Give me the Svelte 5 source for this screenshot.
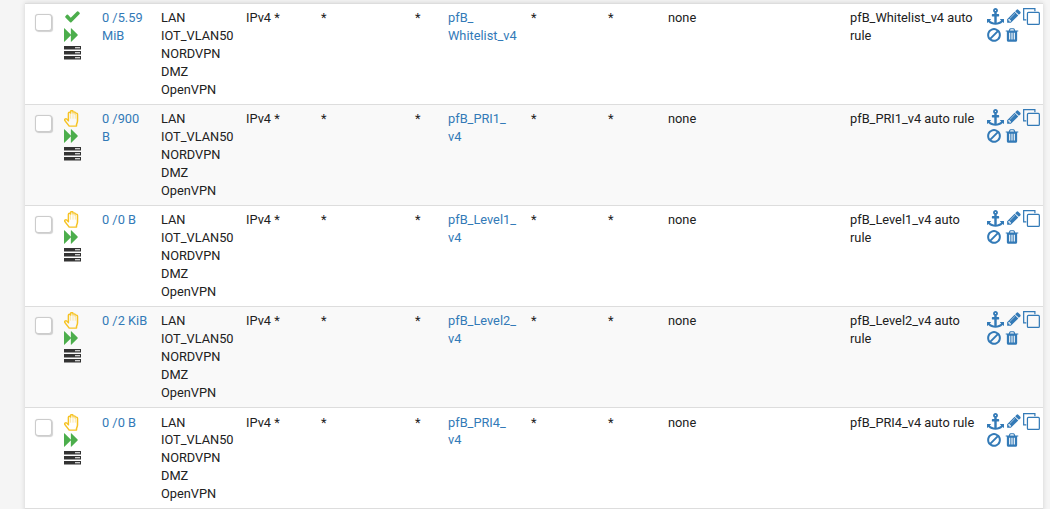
<script>
  const P = {
    anchor: "M960 256q0-26-19-45t-45-19-45 19-19 45 19 45 45 19 45-19 19-45zm832 928v352q0 22-20 30-8 2-12 2-12 0-23-9l-93-93q-119 143-318.5 226.5t-429.5 83.5-429.5-83.5-318.5-226.5l-93 93q-9 9-23 9-4 0-12-2-20-8-20-30v-352q0-14 9-23t23-9h352q22 0 30 20 8 19-7 35l-100 100q67 91 189.5 153.5t271.5 82.5v-647h-192q-26 0-45-19t-19-45v-128q0-26 19-45t45-19h192v-163q-58-34-93-92.5t-35-128.5q0-106 75-181t181-75 181 75 75 181q0 70-35 128.5t-93 92.5v163h192q26 0 45 19t19 45v128q0 26-19 45t-45 19h-192v647q149-20 271.5-82.5t189.5-153.5l-100-100q-15-16-7-35 8-20 30-20h352q14 0 23 9t9 23z",
    pencil: "M491 1536l91-91-235-235-91 91v107h128v128h107zm523-928q0-22-22-22-10 0-17 7l-542 542q-7 7-7 17 0 22 22 22 10 0 17-7l542-542q7-7 7-17zm-54-192l416 416-832 832h-416v-416zm683 96q0 53-37 90l-166 166-416-416 166-165q36-38 90-38 53 0 91 38l235 234q37 39 37 91z",
    ban: "M1440 893q0-161-87-295l-754 753q137 89 297 89 111 0 211.5-43.5t173.5-116.5 116-174.5 43-212.5zm-999 299l755-754q-135-91-300-91-148 0-273 73t-198 199-73 274q0 162 89 299zm1223-299q0 157-61 300t-163.5 246-245 164-298.5 61-298.5-61-245-164-163.5-246-61-300 61-299.5 163.5-245.5 245-164 298.5-61 298.5 61 245 164 163.5 245.5 61 299.5z",
    trash: "M704 1376v-704q0-14-9-23t-23-9h-64q-14 0-23 9t-9 23v704q0 14 9 23t23 9h64q14 0 23-9t9-23zm256 0v-704q0-14-9-23t-23-9h-64q-14 0-23 9t-9 23v704q0 14 9 23t23 9h64q14 0 23-9t9-23zm256 0v-704q0-14-9-23t-23-9h-64q-14 0-23 9t-9 23v704q0 14 9 23t23 9h64q14 0 23-9t9-23zm-544-992h448l-48-117q-7-9-17-11h-317q-10 2-17 11zm928 32v64q0 14-9 23t-23 9h-96v948q0 83-47 143.5t-113 60.5h-832q-66 0-113-58.5t-47-141.5v-952h-96q-14 0-23-9t-9-23v-64q0-14 9-23t23-9h309l70-167q15-37 54-63t79-26h320q40 0 79 26t54 63l70 167h309q14 0 23 9t9 23z",
    check: "M1671 566q0 40-28 68l-724 724-136 136q-28 28-68 28t-68-28l-136-136-362-362q-28-28-28-68t28-68l136-136q28-28 68-28t68 28l294 295 656-657q28-28 68-28t68 28l136 136q28 28 28 68z",
    forward: "M45 1651q-19 19-32 13t-13-32v-1472q0-26 13-32t32 13l710 710q9 9 13 19v-710q0-26 13-32t32 13l710 710q19 19 19 45t-19 45l-710 710q-19 19-32 13t-13-32v-710q-4 10-13 19z"
  };
  const ifaces = ["LAN", "IOT_VLAN50", "NORDVPN", "DMZ", "OpenVPN"];
  const rows = [
    { pass: true, states: "0 /5.59 MiB", alias: ["pfB_", "Whitelist_v4"], descr: "pfB_Whitelist_v4 auto rule" },
    { pass: false, states: "0 /900 B", alias: ["pfB_PRI1_", "v4"], descr: "pfB_PRI1_v4 auto rule" },
    { pass: false, states: "0 /0 B", alias: ["pfB_Level1_", "v4"], descr: "pfB_Level1_v4 auto rule" },
    { pass: false, states: "0 /2 KiB", alias: ["pfB_Level2_", "v4"], descr: "pfB_Level2_v4 auto rule" },
    { pass: false, states: "0 /0 B", alias: ["pfB_PRI4_", "v4"], descr: "pfB_PRI4_v4 auto rule" }
  ];
</script>

<div class="page">
  <div class="panel">
    {#each rows as r, i}
      <div class="row" class:odd={i % 2 === 1}>
        <div class="c-check"><span class="box"></span></div>
        <div class="c-icons">
          {#if r.pass}
            <svg class="ic-check" viewBox="0 0 1792 1792"><path fill="#4cae4c" d={P.check} /></svg>
          {:else}
            <svg class="ic-hand" viewBox="1 1 16 18.6" preserveAspectRatio="none"><path fill="none" stroke="#f6c325" stroke-width="1.5" stroke-linejoin="round" stroke-linecap="round" d="M6.2 18.6c-1-1.4-3.9-5.4-4.4-6.2-.8-1.3 1-2.5 2-1.4l1.6 1.9V4.6c0-1.6 2.2-1.6 2.2 0V2.9c0-1.7 2.4-1.7 2.4 0v1.3c0-1.5 2.3-1.5 2.3.2v1c0-1.4 2.2-1.4 2.2.3v7.3c0 1.4-.6 2.6-1 3.8v1.8H6.2z" /><path fill="none" stroke="#fbe6a2" stroke-width="1" d="M7.6 5v5.5M10 3v7.5M12.3 4.5v6" /></svg>
          {/if}
          <svg class="ic-fwd" viewBox="0 0 1792 1792"><path fill="#4cae4c" d={P.forward} /></svg>
          <svg class="ic-srv" viewBox="0 0 17 14">
            <path fill="#333" d="M0 0h17v3.6H0zM0 5h17v3.6H0zM0 10h17v3.6H0z" />
            <path fill="#fff" d="M11 1.3h5v1h-5zM11 6.3h5v1h-5zM11 11.3h5v1h-5z" />
          </svg>
        </div>
        <div class="c-states"><span class="link">{r.states}</span></div>
        <div class="c-if">{#each ifaces as f}<div>{f}</div>{/each}</div>
        <div class="c-proto">IPv4 *</div>
        <div class="c-src">*</div>
        <div class="c-port">*</div>
        <div class="c-alias"><span class="link">{r.alias[0]}<br />{r.alias[1]}</span></div>
        <div class="c-dport">*</div>
        <div class="c-gw">*</div>
        <div class="c-queue">none</div>
        <div class="c-descr">{r.descr}</div>
        <div class="c-actions">
          <svg class="a-anchor" viewBox="0 0 1792 1792"><path d={P.anchor} /></svg>
          <svg class="a-pencil" viewBox="0 0 1792 1792"><path d={P.pencil} /></svg>
          <svg class="a-clone" viewBox="0 0 18 18"><path d="M12.6 3.5V.7H.7v11.9h2.8" /><rect x="4.7" y="4.7" width="12.6" height="12.6" rx="1" /></svg>
          <svg class="a-ban" viewBox="0 0 1792 1792"><path d={P.ban} /></svg>
          <svg class="a-trash" viewBox="0 0 1792 1792"><path d={P.trash} /></svg>
        </div>
      </div>
    {/each}
  </div>
</div>

<style>
  :global(body) { margin: 0; background: #f5f5f5; overflow: hidden; }
  .page { height: 509px; overflow: hidden; padding: 3px 7px 0 25px; box-sizing: border-box; }
  .panel { background: #fff; box-shadow: 0 0 5px rgba(0,0,0,.14); border-top: 1px solid #ddd; font: 12.8px/1.4 Roboto, sans-serif; color: #212121; min-height: 520px; }
  .row {
    display: grid;
    grid-template-columns: 38px 39px 59px 85px 75px 94px 33px 83px 77px 60px 182px 137px 1fr;
    box-sizing: border-box;
    height: 101.1px;
    padding-top: 5.15px;
    border-bottom: 1px solid #ddd;
  }
  .row.odd { background: #f9f9f9; }
  .link { color: #337ab7; }
  .c-states { padding-right: 12px; }
  .c-descr { padding-right: 10px; }
  .c-check { padding: 5px 0 0 10px; }
  .box { display: block; box-sizing: border-box; width: 17px; height: 17px; background: #fff; border: 1px solid #ccc; border-radius: 3px; box-shadow: 0 0 1px #ccc, 1px 1px 1px rgba(0,0,0,.18); }
  .c-icons { display: flex; flex-direction: column; align-items: flex-start; padding-left: 1px; margin-top: -1px; }
  .ic-check { width: 17px; height: 17px; margin: 0 0 1px; }
  .ic-hand { width: 16px; height: 17px; margin: 1px 0 0; }
  .ic-fwd { width: 16px; height: 16px; margin-top: 1px; }
  .ic-srv { width: 17px; height: 14px; margin-top: 3px; }
  .c-actions { display: flex; flex-wrap: wrap; align-items: flex-start; align-content: flex-start; gap: 2px; width: 54px; margin-top: -1px; }
  .c-actions svg path { fill: #337ab7; }
  .a-anchor { width: 17px; height: 17px; }
  .a-pencil { width: 16px; height: 16px; }
  .a-clone { width: 17px; height: 17px; margin-left: -1px; }
  .c-actions .a-clone path, .a-clone rect { fill: none; stroke: #337ab7; stroke-width: 1.3; }
  .a-ban { width: 16px; height: 16px; margin-left: -1px; }
  .a-trash { width: 16px; height: 16px; }
</style>
